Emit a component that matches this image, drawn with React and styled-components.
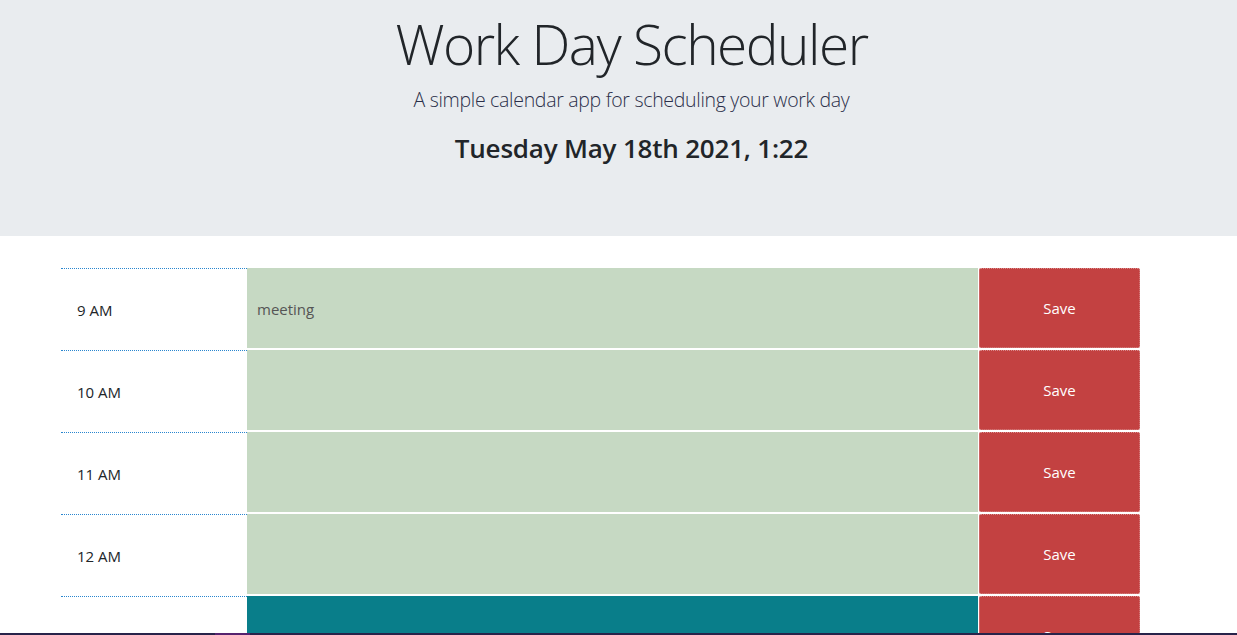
import React from "react";
import styled, { createGlobalStyle } from "styled-components";

const Global = createGlobalStyle`
  html, body { margin: 0; padding: 0; height: 100%; overflow: hidden; background: #fff; }
  body { font-family: "Open Sans", "Noto Sans", sans-serif; color: #212529; }
  * { box-sizing: border-box; }
`;

const Page = styled.div`
  height: 635px;
  overflow: hidden;
`;

const Header = styled.header`
  background: #e9ecef;
  height: 236px;
  padding: 10px 0 0 26px;
  text-align: center;
`;

const Title = styled.h1`
  margin: 0;
  font-size: 55px;
  line-height: 67px;
  font-weight: 300;
  letter-spacing: -1.5px;
  color: #212529;
`;

const Lead = styled.p`
  margin: 8px 0 0;
  font-size: 19.5px;
  line-height: 30px;
  font-weight: 300;
  letter-spacing: -0.3px;
  color: #2b2f4a;
`;

const DateLine = styled.p`
  margin: 15px 0 0;
  font-size: 26px;
  line-height: 36px;
  font-weight: 600;
  letter-spacing: -0.2px;
  color: #212529;
`;

const Schedule = styled.main`
  padding: 32px 0 0 61px;
  display: flex;
  flex-direction: column;
`;

const Row = styled.div`
  display: flex;
  height: 82px;
`;

const Hour = styled.div`
  width: 186px;
  border-top: 1px dotted #2a86cf;
  padding: 1px 0 0 16px;
  display: flex;
  align-items: center;
  font-size: 15px;
  color: #212529;
`;

const Entry = styled.textarea`
  width: 731px;
  height: 80px;
  margin: 0;
  border: none;
  resize: none;
  outline: none;
  padding: 30px 10px 0;
  font-family: inherit;
  font-size: 15px;
  line-height: 22px;
  color: #555;
  background: ${(p) => (p.$state === "present" ? "#097e8a" : "#c6d9c3")};
`;

const SaveButton = styled.button`
  width: 161px;
  height: 80px;
  margin-left: 1px;
  border: 1px dotted #d88a8a;
  border-radius: 2px;
  background: #c34141;
  color: #fff;
  font-family: inherit;
  font-size: 15px;
  padding: 0;
  cursor: pointer;
`;

const Taskbar = styled.div`
  position: fixed;
  left: 0;
  right: 0;
  bottom: 0;
  height: 2px;
  background: #28234a;
`;

const TaskbarAccent = styled.div`
  position: absolute;
  left: 215px;
  width: 35px;
  top: 0;
  bottom: 0;
  background: #56236f;
`;

const hours = [
  { label: "9 AM", text: "meeting", state: "future" },
  { label: "10 AM", text: "", state: "future" },
  { label: "11 AM", text: "", state: "future" },
  { label: "12 AM", text: "", state: "future" },
  { label: "1 PM", text: "", state: "present" },
  { label: "2 PM", text: "", state: "future" },
];

export default function App() {
  return (
    <Page>
      <Global />
      <Header>
        <Title>Work Day Scheduler</Title>
        <Lead>A simple calendar app for scheduling your work day</Lead>
        <DateLine>Tuesday May 18th 2021, 1:22</DateLine>
      </Header>
      <Schedule>
        {hours.map((h) => (
          <Row key={h.label}>
            <Hour>{h.label}</Hour>
            <Entry $state={h.state} defaultValue={h.text} />
            <SaveButton>Save</SaveButton>
          </Row>
        ))}
      </Schedule>
      <Taskbar>
        <TaskbarAccent />
      </Taskbar>
    </Page>
  );
}
